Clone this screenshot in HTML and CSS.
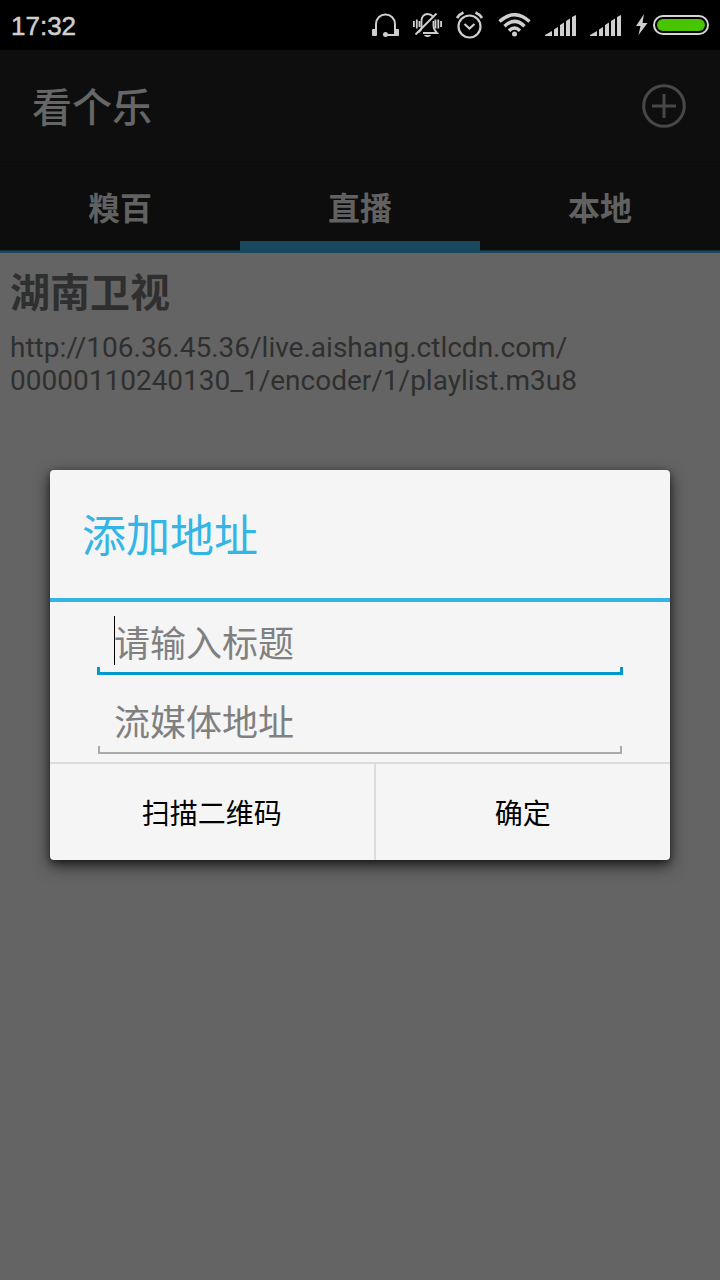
FILE: index.html
```html
<!DOCTYPE html>
<html lang="zh-CN">
<head>
<meta charset="utf-8">
<meta name="viewport" content="width=device-width, initial-scale=1">
<title>看个乐</title>
<link rel="stylesheet" href="styles.css">
</head>
<body>
<div class="statusbar">
  <time class="clock">17:32</time>
  <div class="status-icons">
    <svg width="27" height="24" viewBox="0 0 27 24" fill="none" stroke="#cfcfcf" stroke-width="2">
      <path d="M4 18V11A9.500 9.500 0 0 1 23 11V18M24 22H14"/>
      <rect x="0" y="16" width="5" height="7" rx="1" fill="#cfcfcf" stroke="none"/>
      <rect x="22" y="16" width="5" height="7" rx="1" fill="#cfcfcf" stroke="none"/>
      <circle cx="13.500" cy="21.500" r="2.500" fill="#cfcfcf" stroke="none"/>
    </svg>
    <svg width="29" height="24" viewBox="0 0 29 24" fill="none" stroke="#cfcfcf" stroke-width="1.800">
      <path d="M.9 8V14M3.800 6.500V15.500M6.500 8V14M22.500 6.500V15.500M25.300 6.500V15.500M28.100 8V14"/>
      <path d="M8.500 15V8C8.500 3.500 11 1 14.500 1C17 1 18.500 2 20 3.500M20.500 8V13C20.500 16 22 18 24 20H10M4.500 19.500C7 18.500 8 17.500 8.500 15"/>
      <path d="M2.500 21.500L23.500 .5" stroke-width="2"/>
      <path d="M11 22H18C17.500 24.500 11.500 24.500 11 22Z" fill="#cfcfcf" stroke="none"/>
    </svg>
    <svg width="28" height="28" viewBox="0 0 28 28" fill="none" stroke="#cfcfcf" stroke-width="2.200">
      <circle cx="13.500" cy="15.500" r="11"/>
      <path d="M1 7Q3 3.500 7.500 1.500M19.500 1.500Q24 3.500 26 7" stroke-width="2.600"/>
      <path d="M8.500 13L13.500 17.500L18.500 13"/>
    </svg>
    <svg width="33" height="24" viewBox="0 0 33 24" fill="none" stroke="#cfcfcf" stroke-width="3.400">
      <path d="M1.500 8.500Q16.500 -5 31.500 8.500M6.500 13.300Q16.500 3.500 26.500 13.300M11 17.700Q16.500 12.300 22 17.700"/>
      <circle cx="16.500" cy="21" r="2.500" fill="#cfcfcf" stroke="none"/>
    </svg>
    <svg width="31" height="20" viewBox="0 0 31 20" overflow="visible" fill="#cfcfcf">
      <path d="M0 20L7 16V21H0ZM9 14.500L13 12V21H9ZM15 10L19 7.500V21H15ZM21 6L25 3.500V21H21ZM27 2L31 0V21H27Z"/>
    </svg>
    <svg width="31" height="20" viewBox="0 0 31 20" overflow="visible" fill="#cfcfcf">
      <path d="M0 20L7 16V21H0ZM9 14.500L13 12V21H9ZM15 10L19 7.500V21H15ZM21 6L25 3.500V21H21ZM27 2L31 0V21H27Z"/>
    </svg>
    <span class="power">
      <svg width="13" height="22" viewBox="0 0 13 22" fill="#cfcfcf">
        <path d="M9 0L1 12H5.500L3.500 21L12.500 9H7.500Z"/>
      </svg>
      <svg width="56" height="20" viewBox="0 0 56 20">
        <rect x="1" y="1" width="54" height="18" rx="9" fill="none" stroke="#d6d6d6" stroke-width="2"/>
        <rect x="4" y="4" width="48" height="12" rx="6" fill="#48c400"/>
      </svg>
    </span>
  </div>
</div>

<div class="app">
  <header class="appbar">
    <h1 class="app-title">看个乐</h1>
    <button class="add" type="button" aria-label="添加">
      <svg width="44" height="44" viewBox="0 0 44 44" fill="none" stroke="#484848" stroke-width="3">
        <circle cx="22" cy="22" r="20.300"/>
        <path d="M10 22H34M22 10V34"/>
      </svg>
    </button>
  </header>
  <nav class="tabs">
    <button class="tab" type="button">糗百</button>
    <button class="tab tab-active" type="button">直播</button>
    <button class="tab" type="button">本地</button>
  </nav>
  <main class="channels">
    <h2 class="channel-name">湖南卫视</h2>
    <p class="channel-url">http://106.36.45.36/live.aishang.ctlcdn.com/<wbr>00000110240130_1/encoder/1/playlist.m3u8</p>
  </main>

  <div class="overlay">
    <form class="dialog" role="dialog" aria-labelledby="dialog-title">
      <h2 class="dialog-title" id="dialog-title">添加地址</h2>
      <div class="fields">
        <div class="field">
          <input class="input input-focused" type="text" placeholder="请输入标题" aria-label="请输入标题">
          <span class="caret"></span>
        </div>
        <div class="field">
          <input class="input" type="text" placeholder="流媒体地址" aria-label="流媒体地址">
        </div>
      </div>
      <div class="actions">
        <button class="action action-scan" type="button">扫描二维码</button>
        <button class="action" type="button">确定</button>
      </div>
    </form>
  </div>
</div>
</body>
</html>
```

FILE: styles.css
```css
* {
  box-sizing: border-box;
}

body {
  margin: 0;
  min-height: 100vh;
  display: flex;
  flex-direction: column;
  background: #646464;
  font-family: "Noto Sans CJK SC", "Noto Sans", sans-serif;
}

h1, h2, p {
  margin: 0;
  font-weight: 400;
}

button, input {
  margin: 0;
  padding: 0;
  border: 0;
  border-radius: 0;
  background: none;
  font: inherit;
}

svg {
  display: block;
}

.statusbar {
  height: 50px;
  padding: 0 11px;
  display: flex;
  align-items: center;
  justify-content: space-between;
  background: #000;
}

.clock {
  padding-top: 2px;
  color: #cfcfcf;
  font: 26px/48px "Liberation Sans", Arial, sans-serif;
  -webkit-text-stroke: 0.5px #cfcfcf;
}

.status-icons {
  display: flex;
  align-items: center;
  gap: 14px;
}

.power {
  display: flex;
  align-items: center;
  gap: 5px;
}

.app {
  flex: 1;
  position: relative;
}

.appbar {
  height: 112px;
  padding: 0 34px 0 32px;
  display: flex;
  align-items: center;
  justify-content: space-between;
  background: #0e0e0e;
  border-bottom: 1px solid #0a0a0a;
}

.app-title {
  padding-bottom: 2px;
  color: #666;
  font-size: 40px;
  font-weight: 500;
  line-height: 60px;
}

.tabs {
  display: grid;
  grid-template-columns: repeat(3, 1fr);
  background: #0d0d0d;
}

.tab {
  height: 91px;
  padding-bottom: 3px;
  color: #616161;
  font-size: 32px;
  font-weight: 700;
  box-shadow: inset 0 -2px #17485d, inset 0 -3px #12303c;
}

.tab-active {
  box-shadow: inset 0 -12px #17485d;
}

.channels {
  padding: 8px 10px;
  color: #2f2f2f;
}

.channel-name {
  font-size: 40px;
  font-weight: 700;
  line-height: 58px;
}

.channel-url {
  margin-top: 12px;
  font: 28px/33px Roboto, sans-serif;
}

.overlay {
  position: absolute;
  inset: 0;
  padding: 0 50px;
  display: flex;
  align-items: center;
}

.dialog {
  flex: 1;
  border-radius: 4px;
  background: #f5f5f5;
  box-shadow: 0 6px 16px rgba(0, 0, 0, 0.65), 0 2px 6px rgba(0, 0, 0, 0.4);
}

.dialog-title {
  padding: 0 32px 2px;
  color: #33b5e5;
  font-size: 44px;
  line-height: 126px;
  border-bottom: 4px solid #33b5e5;
}

.fields {
  padding: 8px 47px;
  display: grid;
  gap: 14px;
}

.field {
  position: relative;
  display: flex;
}

.input {
  --line: #aaa;
  --weight: 2px;
  flex: 1;
  min-width: 0;
  height: 65px;
  margin: 0 1px;
  padding: 0 16px 3px;
  color: #000;
  font-size: 36px;
  outline: none;
  background:
    linear-gradient(var(--line), var(--line)) bottom / 100% var(--weight) no-repeat,
    linear-gradient(var(--line), var(--line)) left bottom / var(--weight) 8px no-repeat,
    linear-gradient(var(--line), var(--line)) right bottom / var(--weight) 8px no-repeat;
}

.input-focused {
  --line: #0099cc;
  --weight: 3px;
  margin: 0;
  padding: 0 17px 4px;
}

.input::placeholder {
  color: #808080;
  opacity: 1;
}

.caret {
  position: absolute;
  left: 17px;
  top: 6px;
  width: 1px;
  height: 49px;
  background: #000;
}

.actions {
  display: flex;
  border-top: 2px solid #dcdcdc;
}

.action {
  flex: 10 1 0;
  height: 96px;
  color: #000;
  font-size: 28px;
}

.action-scan {
  flex-grow: 11;
  border-right: 2px solid #dcdcdc;
}
```
